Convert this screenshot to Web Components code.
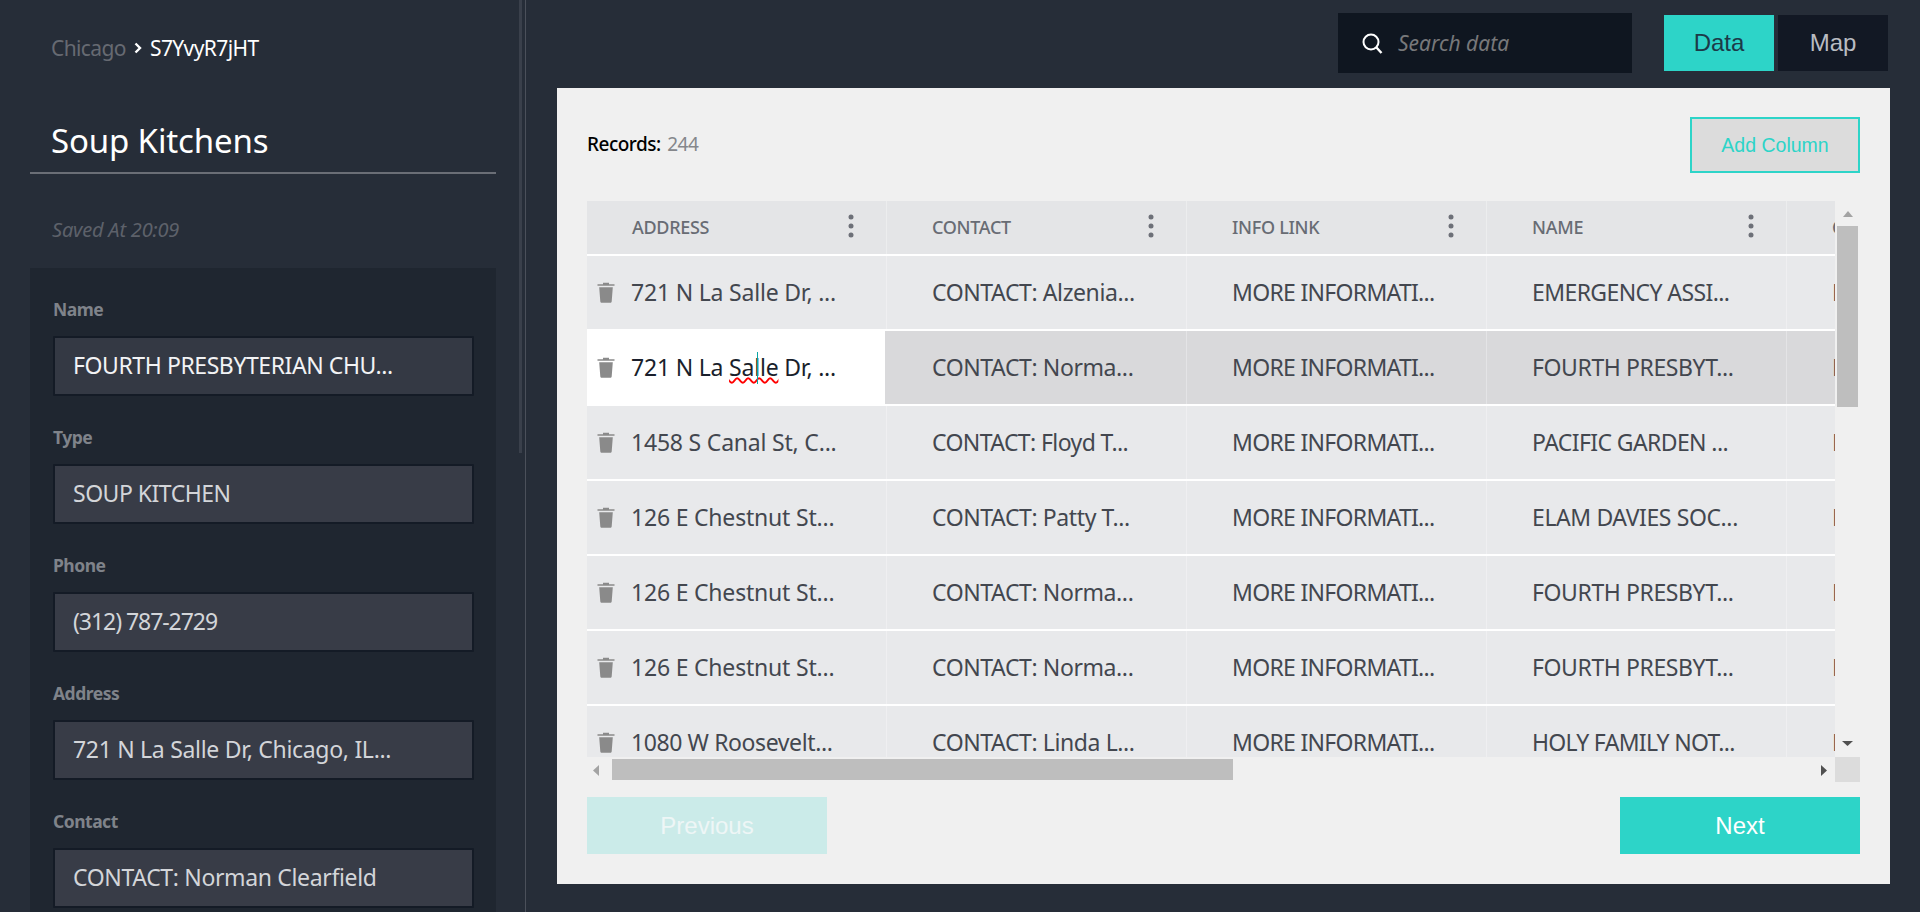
<!DOCTYPE html>
<html><head><meta charset="utf-8"><title>Soup Kitchens</title>
<style>
html,body{margin:0;height:912px;overflow:hidden;background:#262d38}
body{font-family:"Noto Sans","Open Sans",sans-serif}
.more{--ls:-.7px}
.tight{--ls:-.6px}
.wide{--ls:-.2px}
</style></head>
<body>
<app-shell>
  <app-sidebar slot="side">
    <form-field label="Name" value="FOURTH PRESBYTERIAN CHU..." bright ls="-.42px"></form-field>
    <form-field label="Type" value="SOUP KITCHEN" ls="-.5px"></form-field>
    <form-field label="Phone" value="(312) 787-2729" ls="-1.05px"></form-field>
    <form-field label="Address" value="721 N La Salle Dr, Chicago, IL..." ls="-.3px"></form-field>
    <form-field label="Contact" value="CONTACT: Norman Clearfield" ls="-.35px"></form-field>
  </app-sidebar>
  <top-bar slot="top"></top-bar>
  <data-panel slot="panel">
    <data-table>
      <data-row head>
        <data-cell head menu>ADDRESS</data-cell><data-cell head menu>CONTACT</data-cell><data-cell head menu>INFO LINK</data-cell><data-cell head menu>NAME</data-cell><data-cell head>C</data-cell>
      </data-row>
      <data-row>
        <data-cell trash class="wide">721 N La Salle Dr, ...</data-cell><data-cell>CONTACT: Alzenia...</data-cell><data-cell class="more">MORE INFORMATI...</data-cell><data-cell class="tight">EMERGENCY ASSI...</data-cell><data-cell>N</data-cell>
      </data-row>
      <data-row selected>
        <data-cell trash editing class="wide">721 N La <edit-word>Salle</edit-word> Dr, ...</data-cell><data-cell>CONTACT: Norma...</data-cell><data-cell class="more">MORE INFORMATI...</data-cell><data-cell>FOURTH PRESBYT...</data-cell><data-cell>M</data-cell>
      </data-row>
      <data-row>
        <data-cell trash class="wide">1458 S Canal St, C...</data-cell><data-cell class="tight">CONTACT: Floyd T...</data-cell><data-cell class="more">MORE INFORMATI...</data-cell><data-cell class="tight">PACIFIC GARDEN ...</data-cell><data-cell>N</data-cell>
      </data-row>
      <data-row>
        <data-cell trash class="wide">126 E Chestnut St...</data-cell><data-cell>CONTACT: Patty T...</data-cell><data-cell class="more">MORE INFORMATI...</data-cell><data-cell>ELAM DAVIES SOC...</data-cell><data-cell>N</data-cell>
      </data-row>
      <data-row>
        <data-cell trash class="wide">126 E Chestnut St...</data-cell><data-cell>CONTACT: Norma...</data-cell><data-cell class="more">MORE INFORMATI...</data-cell><data-cell>FOURTH PRESBYT...</data-cell><data-cell>N</data-cell>
      </data-row>
      <data-row>
        <data-cell trash class="wide">126 E Chestnut St...</data-cell><data-cell>CONTACT: Norma...</data-cell><data-cell class="more">MORE INFORMATI...</data-cell><data-cell>FOURTH PRESBYT...</data-cell><data-cell>N</data-cell>
      </data-row>
      <data-row>
        <data-cell trash>1080 W Roosevelt...</data-cell><data-cell>CONTACT: Linda L...</data-cell><data-cell class="more">MORE INFORMATI...</data-cell><data-cell class="more">HOLY FAMILY NOT...</data-cell><data-cell>N</data-cell>
      </data-row>
    </data-table>
  </data-panel>
</app-shell>
<script>
function def(name, html){
  customElements.define(name, class extends HTMLElement{
    connectedCallback(){
      if(this.shadowRoot) return;
      const r=this.attachShadow({mode:'open'});
      r.innerHTML = typeof html==='function' ? html(this) : html;
    }
  });
}
const ARIAL='"Liberation Sans",Arial,sans-serif';
def('app-shell',`<style>
:host{display:flex;width:1920px;height:912px;overflow:hidden;color:#fff}
.side{width:525px;flex:none;border-right:1px solid #4b505a;box-sizing:content-box;position:relative;overflow:hidden}
.bar{position:absolute;left:519px;top:0;width:3px;height:453px;background:#3a404b}
main{flex:1;min-width:0;display:flex;flex-direction:column;padding:0 30px 0 31px}
</style>
<div class="side"><slot name="side"></slot><div class="bar"></div></div>
<main><slot name="top"></slot><slot name="panel"></slot></main>`);
def('app-sidebar',`<style>
:host{display:block;padding:0 29px 0 30px}
.crumb{height:96px;box-sizing:border-box;padding:0 0 0 21px;display:flex;align-items:center;font-size:21px;letter-spacing:-.6px}
.crumb .c{color:#666a72}
.crumb svg{margin:0 8px 0 8px}
.crumb .id{color:#fff}
h1{margin:0;height:78px;box-sizing:border-box;padding:23px 0 0 21px;font:400 33px/44px "Noto Sans",sans-serif;color:#fff;letter-spacing:-.15px;border-bottom:2px solid #6a6e76}
.saved{height:94px;box-sizing:border-box;padding:44px 0 0 22px;font-style:italic;font-size:20px;line-height:24px;color:#5d616a;letter-spacing:-.2px}
.form{background:#1f2630;padding:22px 22px 0 23px;height:644px;box-sizing:border-box;display:flex;flex-direction:column}
</style>
<div class="crumb"><span class="c">Chicago</span><svg width="8" height="12" viewBox="0 0 8 12"><path d="M1.5 1.5 6 6l-4.500 4.500" fill="none" stroke="#fff" stroke-width="2.400"/></svg><span class="id">S7YvyR7jHT</span></div>
<h1>Soup Kitchens</h1>
<div class="saved">Saved At 20:09</div>
<div class="form"><slot></slot></div>`);
def('form-field',el=>`<style>
:host{display:block;height:128px;flex:none}
label{display:block;height:46px;font-weight:700;font-size:17.500px;line-height:38px;color:#7f838a;letter-spacing:-.5px}
.in{height:60px;box-sizing:border-box;border:2px solid #141b26;border-radius:1px;background:${el.hasAttribute('bright')?'#343944':'#383c47'};color:${el.hasAttribute('bright')?'#f2f3f5':'#d3d5d9'};font-size:23px;line-height:54px;padding-left:18px;white-space:nowrap;overflow:hidden;letter-spacing:${el.getAttribute('ls')}}
</style><label>${el.getAttribute('label')}</label><div class="in">${el.getAttribute('value')}</div>`);
def('top-bar',`<style>
:host{display:flex;justify-content:flex-end;align-items:center;height:88px;box-sizing:border-box;padding:0 2px 2px 0;flex:none}
.search{width:294px;height:60px;background:#0f1620;display:flex;align-items:center;padding-left:24px;box-sizing:border-box;margin-right:32px}
.search svg{margin-right:15px}
.search span{font-style:italic;font-size:21px;color:#77787a}
.b{width:110px;height:56px;display:flex;align-items:center;justify-content:center;font:24px ${ARIAL}}
.on{background:#2dd4c8;color:#1c3a48}
.off{background:#121824;color:#b9bcc2;margin-left:4px}
</style>
<div class="search"><svg width="21" height="21" viewBox="0 0 21 21"><circle cx="9" cy="9" r="7.500" fill="none" stroke="#fff" stroke-width="2"/><path d="m14.500 14.500 5 5.500" stroke="#fff" stroke-width="2.400"/></svg><span>Search data</span></div>
<div class="b on">Data</div><div class="b off">Map</div>`);
def('data-panel',`<style>
:host{display:block;background:#f0f0f0;height:796px;box-sizing:border-box;padding:29px 30px 30px 30px;flex:none}
.head{display:flex;justify-content:space-between;align-items:center;height:56px;margin-bottom:28px}
.rec{font-size:19px;font-weight:500;color:#000;letter-spacing:-.5px;word-spacing:2px;position:relative;top:-1px}
.rec span{font-weight:400;color:#85878b}
.add{width:170px;height:56px;box-sizing:border-box;border:2px solid #2dd4c8;background:#dcdcdc;color:#2dd4c8;font:19.500px ${ARIAL};display:flex;align-items:center;justify-content:center}
.foot{display:flex;justify-content:space-between;margin-top:15px}
.btn{width:240px;height:57px;display:flex;align-items:center;justify-content:center;font:24px ${ARIAL};color:#fff;background:#2dd4c8}
.prev{background:#cbebe9;color:#eef6f6}
</style>
<div class="head"><div class="rec">Records: <span>244</span></div><div class="add">Add Column</div></div>
<slot></slot>
<div class="foot"><div class="btn prev">Previous</div><div class="btn">Next</div></div>`);
const tri=(w,h,d,c)=>`<svg width="${w}" height="${h}" viewBox="0 0 ${w} ${h}" style="display:block;flex:none"><path d="${d}" fill="${c}"/></svg>`;
def('data-table',`<style>
:host{display:grid;grid-template-columns:1248px 25px;grid-template-rows:556px 25px;width:1273px}
.view{overflow:hidden}
.vs{display:flex;flex-direction:column;align-items:center;padding:10px 0 11px;box-sizing:border-box}
.vs i{display:block;width:21px;height:181px;background:#bebebe;margin-top:9px;margin-bottom:auto}
.hs{display:flex;align-items:flex-start;padding:2px 8px 0 6px;box-sizing:border-box;height:25px}
.hs .l{margin:6px 0 0 0}
.hs i{display:block;width:621px;height:21px;background:#bebebe;margin:0 auto 0 13px}
.hs .r{margin-top:6px}
.corner{background:#dcdcdc}
</style>
<div class="view"><slot></slot></div>
<div class="vs">${tri(10,6,'M5 0l5 6H0z','#a3a3a3')}<i></i>${tri(11,5,'M0 0h11L5.500 5z','#505050')}</div>
<div class="hs"><span class="l">${tri(6,11,'M6 0v11L0 5.500z','#a3a3a3')}</span><i></i><span class="r">${tri(6,11,'M0 0v11l6-5.500z','#505050')}</span></div>
<div class="corner"></div>`);
def('data-row',el=>{
  const head=el.hasAttribute('head'), sel=el.hasAttribute('selected');
  return `<style>
:host{display:flex;width:1500px;height:${head?55:75}px;box-sizing:border-box;border-bottom:2px solid #fff;background:${head?'#e4e5e7':sel?'#d9d9db':'#e8e9eb'}}
</style><slot></slot>`;
});
def('data-cell',el=>{
  const head=el.hasAttribute('head'),menu=el.hasAttribute('menu'),trash=el.hasAttribute('trash'),ed=el.hasAttribute('editing');
  return `<style>
:host{display:flex;align-items:center;flex:none;width:${ed?298:300}px;${ed?'margin-right:2px;background:#fff;':''}box-sizing:border-box;padding:0 0 1px 10px;border-right:${ed?'0':'1px solid rgba(255,255,255,.3)'};white-space:nowrap;overflow:hidden;
 color:${ed?'#1a1f2c':head?'#686c74':'#43474f'};font-size:${head?'18px':'23px'};font-weight:${head?500:400};letter-spacing:${head?'-.3px':'var(--ls,-.4px)'}}
.ic{width:18px;height:21px;margin-right:${trash?16:17}px;flex:none}
.dots{margin-left:auto;margin-right:32px;flex:none;display:block;position:relative;top:-1px}
</style>
${trash?`<svg class="ic" viewBox="0 0 18 21"><path d="M6 2.200V.800h6v1.400h5.500v1.600H.5V2.200zM2.200 5.200h13.600l-1.100 14.200c-.1.900-.700 1.400-1.500 1.400H4.800c-.8 0-1.400-.5-1.500-1.400z" fill="#8a8a8a"/></svg>`:`<span class="ic"></span>`}
<span><slot></slot></span>
${menu?`<svg class="dots" width="6" height="24" viewBox="0 0 6 24"><circle cx="3" cy="3" r="2.500" fill="#6d7078"/><circle cx="3" cy="12" r="2.500" fill="#6d7078"/><circle cx="3" cy="21" r="2.500" fill="#6d7078"/></svg>`:''}`;
});
def('edit-word',el=>`<style>
:host{display:inline;position:relative;text-decoration:underline wavy #f00 1.5px;text-underline-offset:1px}
.caret{position:absolute;left:28px;top:1px;width:1px;height:32px;background:#0aa5a5}
</style><slot></slot><span class="caret"></span>`);
</script>
</body></html>
